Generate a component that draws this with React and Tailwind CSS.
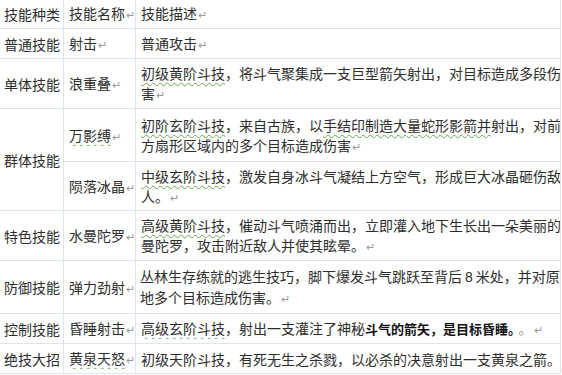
import React from "react";

const Mark = () => <span className="text-[11px] text-[#9a9a9a] ml-[1px]">↵</span>;

const Wavy = ({ children }) => (
  <span className="underline decoration-wavy decoration-[#6aa84f] decoration-1 underline-offset-[3px]">
    {children}
  </span>
);

const cellBase = "border border-[#dde6ee] align-middle p-0";

function Cell({ h, children, rowSpan, padL = "pl-[5px]" }) {
  return (
    <td rowSpan={rowSpan} className={`${cellBase} ${h}`}>
      <div className={`overflow-hidden whitespace-nowrap ${padL}`}>{children}</div>
    </td>
  );
}

export default function App() {
  return (
    <div
      className="w-[562px] h-[375px] bg-white overflow-hidden text-[14px] leading-[20px] text-[#2e2e2e]"
      style={{ fontFamily: '"Noto Sans CJK SC", "Liberation Sans", sans-serif' }}
    >
      <table className="table-fixed border-collapse w-[561px] -mt-[2px] -ml-[1px]">
        <colgroup>
          <col className="w-[64px]" />
          <col className="w-[72px]" />
          <col className="w-[425px]" />
        </colgroup>
        <tbody>
          <tr>
            <Cell h="h-[30px]" padL="pl-[4px]">技能种类</Cell>
            <Cell h="h-[30px]">技能名称<Mark /></Cell>
            <Cell h="h-[30px]">技能描述<Mark /></Cell>
          </tr>
          <tr>
            <Cell h="h-[30px]" padL="pl-[4px]">普通技能</Cell>
            <Cell h="h-[30px]">射击<Mark /></Cell>
            <Cell h="h-[30px]">普通攻击<Mark /></Cell>
          </tr>
          <tr>
            <Cell h="h-[50px]" padL="pl-[4px]">单体技能</Cell>
            <Cell h="h-[50px]">浪重叠<Mark /></Cell>
            <Cell h="h-[50px]">
              <div>
                <Wavy>初级黄阶斗技</Wavy>，将斗气聚集成一支巨型箭矢射出，对目标造成多段伤
              </div>
              <div>害<Mark /></div>
            </Cell>
          </tr>
          <tr>
            <Cell h="h-[53px]" rowSpan={2} padL="pl-[4px]">群体技能</Cell>
            <Cell h="h-[53px]"><Wavy>万影缚</Wavy><Mark /></Cell>
            <Cell h="h-[53px]">
              <div>
                <Wavy>初阶玄阶斗技</Wavy>，来自古族，以<Wavy>手结印制造大量蛇形影箭并</Wavy>射出，对前
              </div>
              <div>方扇形区域内的多个目标造成伤害<Mark /></div>
            </Cell>
          </tr>
          <tr>
            <Cell h="h-[49px]">陨落冰晶<Mark /></Cell>
            <Cell h="h-[49px]">
              <div>
                <Wavy>中级玄阶斗技</Wavy>，激发自身冰斗气凝结上方空气，形成巨大冰晶砸伤敌
              </div>
              <div>人。<Mark /></div>
            </Cell>
          </tr>
          <tr>
            <Cell h="h-[50px]" padL="pl-[4px]">特色技能</Cell>
            <Cell h="h-[50px]">水曼陀罗<Mark /></Cell>
            <Cell h="h-[50px]">
              <div>
                <Wavy>高级黄阶斗技</Wavy>，催动斗气喷涌而出，立即灌入地下生长出一朵美丽的
              </div>
              <div>曼陀罗，攻击附近敌人并使其眩晕。<Mark /></div>
            </Cell>
          </tr>
          <tr>
            <Cell h="h-[53px]" padL="pl-[4px]">防御技能</Cell>
            <Cell h="h-[53px]">弹力劲射<Mark /></Cell>
            <Cell h="h-[53px]" padL="pl-[4px]">
              <div>
                丛林生存练就的逃生技巧，脚下爆发斗气跳跃至背后
                <span className="mx-[3px]" style={{ fontFamily: '"Liberation Sans", sans-serif' }}>8</span>
                米处，并对原
              </div>
              <div>地多个目标造成伤害。<Mark /></div>
            </Cell>
          </tr>
          <tr>
            <Cell h="h-[30px]" padL="pl-[4px]">控制技能</Cell>
            <Cell h="h-[30px]">昏睡射击<Mark /></Cell>
            <Cell h="h-[30px]">
              <Wavy>高级玄阶斗技</Wavy>，射出一支灌注了神秘
              <span className="font-bold text-[13px] text-[#111111]">斗气的箭矢，是目标昏睡。</span>
              <span className="text-[#999999] ml-[4px]">。</span>
              <Mark />
            </Cell>
          </tr>
          <tr>
            <Cell h="h-[30px]" padL="pl-[4px]">绝技大招</Cell>
            <Cell h="h-[30px]"><Wavy>黄泉天怒</Wavy><Mark /></Cell>
            <Cell h="h-[30px]">
              初级天阶斗技，有死无生之杀戮，以必杀的决意射出一支黄泉之箭。
            </Cell>
          </tr>
        </tbody>
      </table>
    </div>
  );
}
